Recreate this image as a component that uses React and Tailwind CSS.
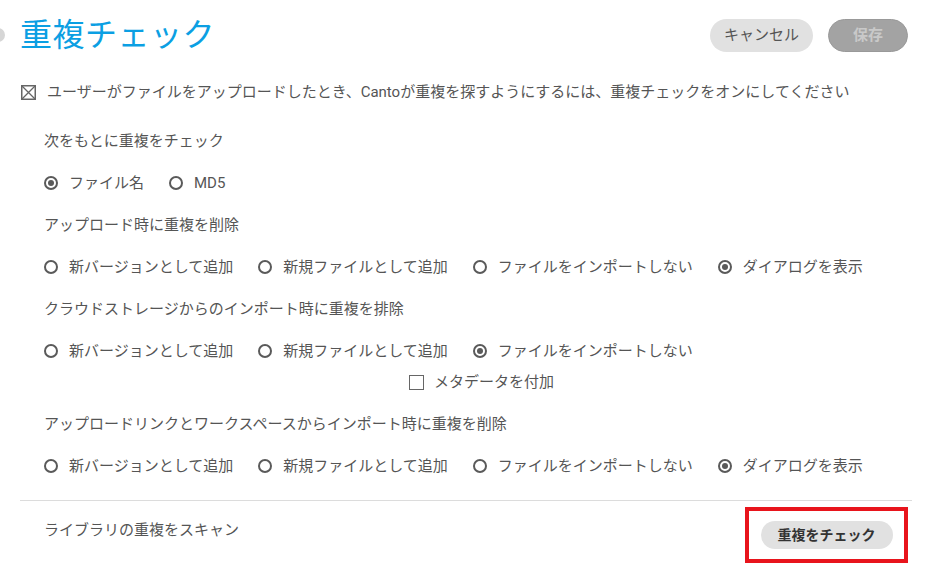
import React from "react";

const Radio = ({ checked, label }) => (
  <label className="flex items-center gap-[11px] cursor-pointer">
    <span className="w-[14px] h-[14px] rounded-full border-2 border-[#5a5a5a] flex items-center justify-center">
      {checked && <span className="w-[6px] h-[6px] rounded-full bg-[#5a5a5a]" />}
    </span>
    <span>{label}</span>
  </label>
);

const RadioRow = ({ options, selected }) => (
  <div className="h-[42px] flex items-center gap-[25px]">
    {options.map((o, i) => (
      <Radio key={o} label={o} checked={i === selected} />
    ))}
  </div>
);

const Heading = ({ children }) => (
  <div className="h-[42px] flex items-center">{children}</div>
);

const uploadOptions = [
  "新バージョンとして追加",
  "新規ファイルとして追加",
  "ファイルをインポートしない",
  "ダイアログを表示",
];

const App = () => {
  return (
    <div
      className="relative w-[932px] h-[569px] overflow-hidden bg-white text-[15px] text-[#555]"
      style={{ fontFamily: "Roboto, 'Noto Sans CJK JP', sans-serif" }}
    >
      <div className="absolute -left-[9px] top-[28px] w-[14px] h-[14px] rounded-full bg-[#d6d6d6]" />

      {/* header */}
      <div className="flex items-center justify-between pl-[20px] pr-[24px] pt-[15px] h-[55px]">
        <h1 className="text-[32px] leading-[40px] text-[#0b9fe3] tracking-[0.5px]">重複チェック</h1>
        <div className="flex items-center gap-[15px]">
          <button className="h-[33px] w-[103px] rounded-full bg-[#e1e1e1] text-[#555] text-[15px]">
            キャンセル
          </button>
          <button className="h-[33px] w-[80px] rounded-full bg-[#a3a3a3] border border-[#999] text-[#c9c9c9] text-[15px] font-bold">
            保存
          </button>
        </div>
      </div>

      <div className="mt-[16px] h-[42px] flex items-center pl-[21px] gap-[11px]">
        <svg width="15" height="15" viewBox="0 0 15 15" className="shrink-0">
          <rect x="0.75" y="0.75" width="13.5" height="13.5" fill="none" stroke="#666" strokeWidth="1.5" />
          <path d="M1 1 L14 14 M14 1 L1 14" stroke="#666" strokeWidth="1.3" />
        </svg>
        <span>ユーザーがファイルをアップロードしたとき、Cantoが重複を探すようにするには、重複チェックをオンにしてください</span>
      </div>

      <div className="pl-[44px] mt-[7px]">
        <Heading>次をもとに重複をチェック</Heading>
        <RadioRow options={["ファイル名", "MD5"]} selected={0} />
        <Heading>アップロード時に重複を削除</Heading>
        <RadioRow options={uploadOptions} selected={3} />
        <Heading>クラウドストレージからのインポート時に重複を排除</Heading>
        <RadioRow options={uploadOptions.slice(0, 3)} selected={2} />
        <div className="h-[20px] flex items-center gap-[10px] pl-[365px]">
          <span className="w-[15px] h-[15px] border-[1.5px] border-[#666]" />
          <span>メタデータを付加</span>
        </div>
        <div className="mt-[11px]">
          <Heading>アップロードリンクとワークスペースからインポート時に重複を削除</Heading>
          <RadioRow options={uploadOptions} selected={3} />
        </div>
      </div>

      <div className="mx-[20px] mt-[13px] border-t border-[#dcdcdc]" />

      <div className="flex items-start justify-between pl-[44px] pr-[24px] mt-[6px]">
        <div className="mt-[13px] h-[20px] flex items-center">ライブラリの重複をスキャン</div>
        <div className="w-[163px] h-[56px] border-4 border-[#e8141c] flex items-center justify-center">
          <button className="h-[28px] w-[132px] rounded-full bg-[#e1e1e1] text-[#333] text-[14px] font-bold">
            重複をチェック
          </button>
        </div>
      </div>
    </div>
  );
};

export default App;
